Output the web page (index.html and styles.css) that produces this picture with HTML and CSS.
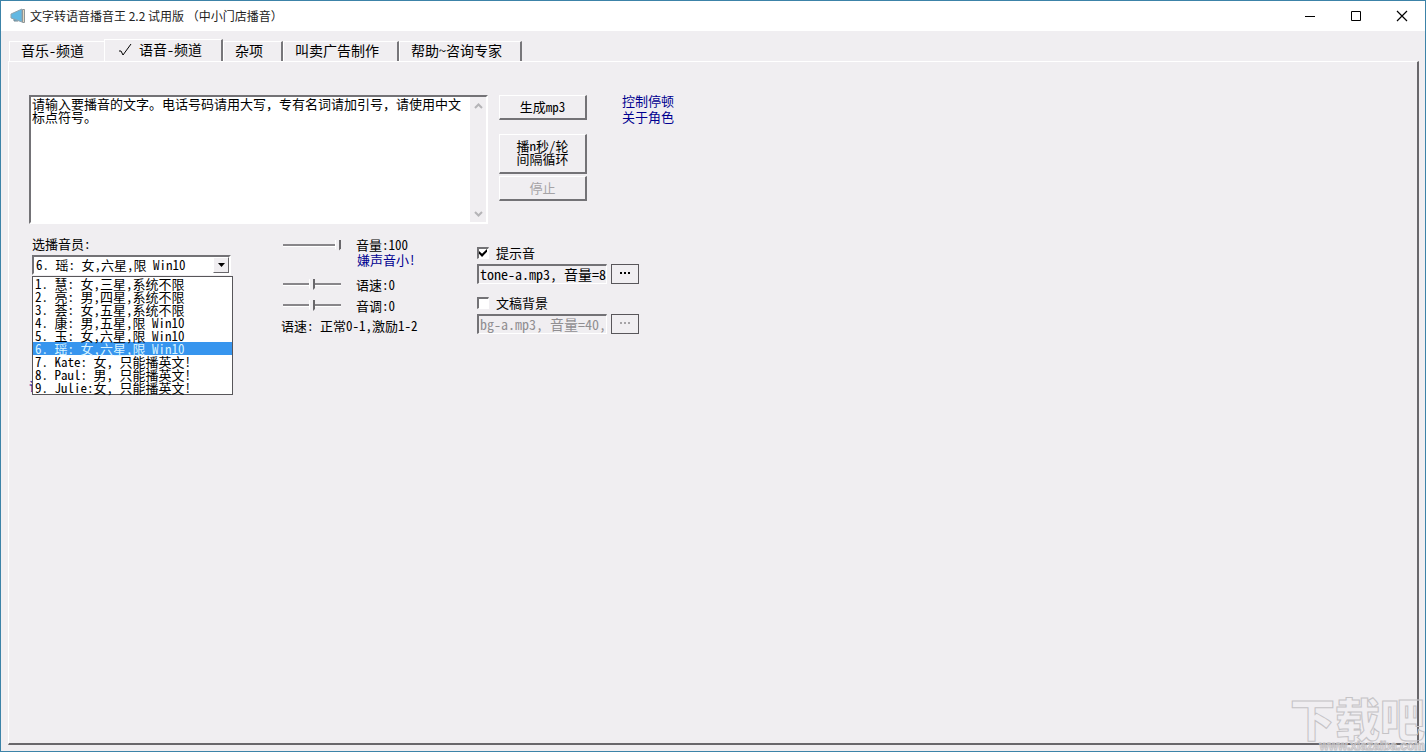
FILE: index.html
```html
<!DOCTYPE html>
<html lang="zh-CN">
<head>
<meta charset="utf-8">
<title>文字转语音播音王</title>
<link rel="stylesheet" href="styles.css">
</head>
<body>
<div class="window">
  <header class="titlebar">
    <svg class="app-icon" width="16" height="16" viewBox="0 0 16 16" aria-hidden="true">
      <path d="M4 10 V13 H8 V11" fill="#68b6dc" stroke="#74868f"/>
      <path d="M1 6 L12 1 V14 L1 10 Z" fill="#62b8e2" stroke="#8fa3ad" stroke-width="1"/>
      <path d="M12.500 1.500 H14.500 V14.500 H12.500 Z" fill="#e5d8bf" stroke="#8c9599" stroke-width="1"/>
    </svg>
    <h1 class="title">文字转语音播音王 2.2 试用版 （中小门店播音）</h1>
    <div class="window-buttons">
      <button class="window-button" aria-label="最小化"><svg width="12" height="12" viewBox="0 0 12 12"><path d="M1 6.500H11" stroke="#000"/></svg></button>
      <button class="window-button" aria-label="最大化"><svg width="12" height="12" viewBox="0 0 12 12"><path d="M1.500 1.500H10.500V10.500H1.500Z" fill="none" stroke="#000"/></svg></button>
      <button class="window-button" aria-label="关闭"><svg width="12" height="12" viewBox="0 0 12 12"><path d="M1 1L11 11M11 1L1 11" stroke="#000" stroke-width="1.200"/></svg></button>
    </div>
  </header>
  <nav class="tabs" role="tablist">
    <button class="tab tab-before" role="tab">音乐-频道</button>
    <button class="tab tab-active" role="tab" aria-selected="true"><svg class="tick" width="14" height="14" viewBox="0 0 14 14" aria-hidden="true"><path d="M1 8L3 8L5 12L13 1" fill="none" stroke="#000"/></svg>语音-频道</button>
    <button class="tab" role="tab">杂项</button>
    <button class="tab" role="tab">叫卖广告制作</button>
    <button class="tab" role="tab">帮助~咨询专家</button>
  </nav>
  <main class="panel">
    <section class="compose">
      <div class="editor">
        <textarea class="editor-text" aria-label="播音文字">请输入要播音的文字。电话号码请用大写，专有名词请加引号，请使用中文标点符号。</textarea>
        <div class="scrollbar">
          <button class="scroll-button" aria-label="向上"><svg width="9" height="6" viewBox="0 0 9 6"><path d="M1 5L4.500 1.500L8 5" fill="none" stroke="#b5b4b7" stroke-width="2"/></svg></button>
          <button class="scroll-button" aria-label="向下"><svg width="9" height="6" viewBox="0 0 9 6"><path d="M1 1L4.500 4.500L8 1" fill="none" stroke="#b5b4b7" stroke-width="2"/></svg></button>
        </div>
      </div>
      <div class="actions">
        <button class="button">生成mp3</button>
        <button class="button button-loop">播n秒/轮<br>间隔循环</button>
        <button class="button" disabled>停止</button>
      </div>
      <div class="links">
        <a class="link" href="#pause">控制停顿</a>
        <a class="link" href="#roles">关于角色</a>
      </div>
    </section>
    <section class="settings">
      <div class="voice">
        <label for="voice">选播音员:</label>
        <div class="combo">
          <select class="combo-box" id="voice"><option>6. 瑶: 女,六星,限 Win10</option></select>
          <span class="combo-arrow"><svg width="7" height="4" viewBox="0 0 7 4" aria-hidden="true"><path d="M0 0H7L3.500 4Z"/></svg></span>
          <ul class="list" role="listbox">
            <li class="item" role="option">1. 慧: 女,三星,系统不限</li>
            <li class="item" role="option">2. 亮: 男,四星,系统不限</li>
            <li class="item" role="option">3. 荟: 女,五星,系统不限</li>
            <li class="item" role="option">4. 康: 男,五星,限 Win10</li>
            <li class="item" role="option">5. 玉: 女,六星,限 Win10</li>
            <li class="item item-selected" role="option" aria-selected="true">6. 瑶: 女,六星,限 Win10</li>
            <li class="item" role="option">7. Kate: 女, 只能播英文!</li>
            <li class="item" role="option">8. Paul: 男, 只能播英文!</li>
            <li class="item" role="option">9. Julie:女, 只能播英文!</li>
          </ul>
        </div>
        <a class="link voice-link" href="#voice-help">语</a>
      </div>
      <div class="sliders">
        <div class="slider-row">
          <input class="slider" id="volume" type="range" min="0" max="100" value="100">
          <label for="volume">音量:100</label>
        </div>
        <a class="link quiet-link" href="#louder">嫌声音小!</a>
        <div class="slider-row slider-row-low">
          <input class="slider" id="speed" type="range" min="-10" max="10" value="0">
          <label for="speed">语速:0</label>
        </div>
        <div class="slider-row slider-row-low">
          <input class="slider" id="pitch" type="range" min="-10" max="10" value="0">
          <label for="pitch">音调:0</label>
        </div>
        <p class="hint">语速: 正常0-1,激励1-2</p>
      </div>
      <div class="sounds">
        <div class="sound">
          <label class="check-label"><input class="check" type="checkbox" checked>提示音</label>
          <div class="file-row">
            <input class="file" type="text" aria-label="提示音文件" value="tone-a.mp3, 音量=8">
            <button class="browse" aria-label="选择提示音"><i class="dot"></i><i class="dot"></i><i class="dot"></i></button>
          </div>
        </div>
        <div class="sound">
          <label class="check-label"><input class="check" type="checkbox">文稿背景</label>
          <div class="file-row">
            <input class="file" type="text" aria-label="背景文件" value="bg-a.mp3, 音量=40," disabled>
            <button class="browse" aria-label="选择背景" disabled><i class="dot"></i><i class="dot"></i><i class="dot"></i></button>
          </div>
        </div>
      </div>
    </section>
  </main>
  <div class="watermark">
    <span class="mark-name">下载吧</span>
    <span class="mark-site">www.xiazaiba.com</span>
  </div>
</div>
</body>
</html>
```
FILE: styles.css
```css
* { box-sizing: border-box; }

body {
  margin: 0;
  color: #000;
  font: 13px/16px "Noto Sans CJK SC", sans-serif;
  font-feature-settings: "hwid";
}

button, input, select, textarea {
  margin: 0;
  padding: 0;
  border: 0;
  border-radius: 0;
  color: inherit;
  background: none;
  font: inherit;
  font-feature-settings: inherit;
}

.window {
  position: relative;
  display: flex;
  flex-direction: column;
  min-height: 100vh;
  padding-bottom: 6px;
  overflow: hidden;
  border: 1px solid #3c83a8;
  background: #f0eef1;
}

.titlebar {
  display: flex;
  align-items: center;
  height: 30px;
  padding-left: 9px;
  background: #fff;
}

.app-icon { margin-right: 4px; }

.title {
  flex: 1;
  margin: 0;
  color: #222;
  font-size: 12px;
  font-weight: 400;
  font-feature-settings: normal;
}

.window-buttons { display: flex; height: 100%; }

.window-button {
  display: flex;
  align-items: center;
  justify-content: center;
  width: 46px;
}

.tabs {
  display: flex;
  align-items: flex-end;
  height: 30px;
  padding-left: 8px;
  font-size: 14px;
}

.tab {
  height: 20px;
  padding: 0 18px 4px 11px;
  border-top: 1px solid #fff;
  border-left: 1px solid #fff;
  border-right: 2px solid #77767a;
  text-align: left;
  white-space: nowrap;
}

.tab-before { padding-right: 20px; border-right: 0; }

.tab-active {
  display: flex;
  height: 22px;
  padding: 1px 19px 0 13px;
}

.tick { margin: 2px 7px 0 0; }

.panel {
  flex: 1;
  margin: 0 6px 0 7px;
  padding: 33px 20px 0;
  border: 1px solid #fff;
  border-right: 2px solid #69676b;
  border-bottom: 2px solid #69676b;
}

.compose { display: flex; align-items: flex-start; }

.editor {
  display: flex;
  width: 459px;
  height: 129px;
  border: 2px solid #737276;
  border-right-color: #fff;
  border-bottom-color: #fff;
  background: #fff;
}

.editor-text {
  flex: 1;
  padding: 0 1px;
  overflow: hidden;
  outline: 0;
  line-height: 13px;
  font-feature-settings: normal;
  resize: none;
}

.scrollbar {
  display: flex;
  flex-direction: column;
  justify-content: space-between;
  width: 16px;
  background: #f0eef1;
}

.scroll-button { display: grid; place-items: center; height: 17px; }

.actions {
  display: flex;
  flex-direction: column;
  gap: 2px;
  width: 88px;
  margin-left: 11px;
}

.button {
  height: 25px;
  padding-bottom: 2px;
  border: 2px solid #fff;
  border-top-width: 1px;
  border-left-width: 1px;
  border-right-color: #737276;
  border-bottom-color: #737276;
  line-height: 13px;
}

.button-loop { height: 40px; margin-top: 12px; padding-bottom: 4px; }

.button:disabled { color: #a5a3a6; }

.links { display: flex; flex-direction: column; margin: -2px 0 0 35px; }

.link { color: #000090; text-decoration: none; }

.settings { display: flex; align-items: flex-start; padding-top: 12px; }

.voice { display: flex; flex-direction: column; width: 201px; margin-left: 3px; }

.combo { position: relative; height: 20px; margin-top: 3px; }

.combo-box {
  width: 199px;
  height: 20px;
  padding: 0 18px 0 2px;
  border: 2px solid #737276;
  border-right-color: #fff;
  border-bottom-color: #fff;
  background: #fff;
  line-height: 16px;
  appearance: none;
}

.combo-arrow {
  position: absolute;
  top: 2px;
  right: 4px;
  display: grid;
  place-items: center;
  width: 16px;
  height: 16px;
  border: 1px solid #fff;
  border-right-color: #69676b;
  border-bottom-color: #69676b;
  background: #f0eef1;
  pointer-events: none;
}

.list {
  position: absolute;
  z-index: 1;
  top: 21px;
  left: 0;
  width: 201px;
  margin: 0;
  padding: 0;
  border: 1px solid #58565a;
  background: #fff;
  list-style: none;
}

.item {
  padding-left: 2px;
  line-height: 13px;
  white-space: nowrap;
}

.item-selected { color: #d9f4ff; background: #3795ee; }

.voice-link { margin: 103px 0 0 -3px; }

.sliders { width: 196px; margin-left: 48px; padding-top: 1px; }

.slider-row { display: flex; align-items: center; height: 16px; }

.slider-row-low { height: 21px; }

.quiet-link { display: block; margin: -1px 0 6px 76px; }

.slider {
  width: 58px;
  height: 14px;
  margin: 0 15px 0 2px;
  appearance: none;
}

.slider::-webkit-slider-runnable-track {
  height: 3px;
  border-top: 2px solid #88868a;
  border-bottom: 1px solid #fff;
}

.slider::-webkit-slider-thumb {
  width: 6px;
  height: 12px;
  margin-top: -6px;
  background: linear-gradient(90deg, #fff 1px, #f0eef1 1px, #f0eef1 4px, #69676b 4px);
  clip-path: polygon(0 0, 100% 0, 100% 75%, 50% 100%, 0 75%);
  appearance: none;
}

.hint { margin: 2px 0 0; white-space: nowrap; }

.sounds { display: flex; flex-direction: column; gap: 11px; padding-top: 9px; }

.check-label { display: flex; align-items: center; height: 16px; margin-bottom: 3px; }

.check {
  width: 12px;
  height: 12px;
  margin-right: 7px;
  border: 2px solid #737276;
  border-right: 1px solid #fff;
  border-bottom: 1px solid #fff;
  background: #fff;
  appearance: none;
}

.check:checked::before {
  display: block;
  width: 8px;
  height: 8px;
  background: #000;
  clip-path: polygon(0 25%, 38% 60%, 100% 0, 100% 35%, 38% 100%, 0 60%);
  content: "";
}

.file-row { display: flex; gap: 4px; }

.file {
  width: 130px;
  height: 20px;
  padding: 0 0 2px 1px;
  border: 2px solid #737276;
  border-right: 1px solid #fff;
  border-bottom: 1px solid #fff;
  font-size: 14px;
}

.file:disabled { color: #908e91; }

.browse {
  display: flex;
  justify-content: center;
  gap: 2px;
  width: 28px;
  height: 20px;
  padding-top: 7px;
  border: 1px solid #58565a;
}

.dot { width: 2px; height: 2px; background: #000; }

.browse:disabled .dot { background: #a5a3a6; }

.watermark {
  position: absolute;
  right: 0;
  bottom: -1px;
  display: flex;
  flex-direction: column;
  align-items: flex-end;
  color: #f0eef1;
  white-space: nowrap;
  pointer-events: none;
  -webkit-text-fill-color: transparent;
  -webkit-text-stroke: 1px #c5c3c6;
}

.mark-name { font-size: 45px; font-weight: 900; line-height: 44px; }

.mark-site { font: 700 12px/12px "Liberation Sans", sans-serif; }
```
